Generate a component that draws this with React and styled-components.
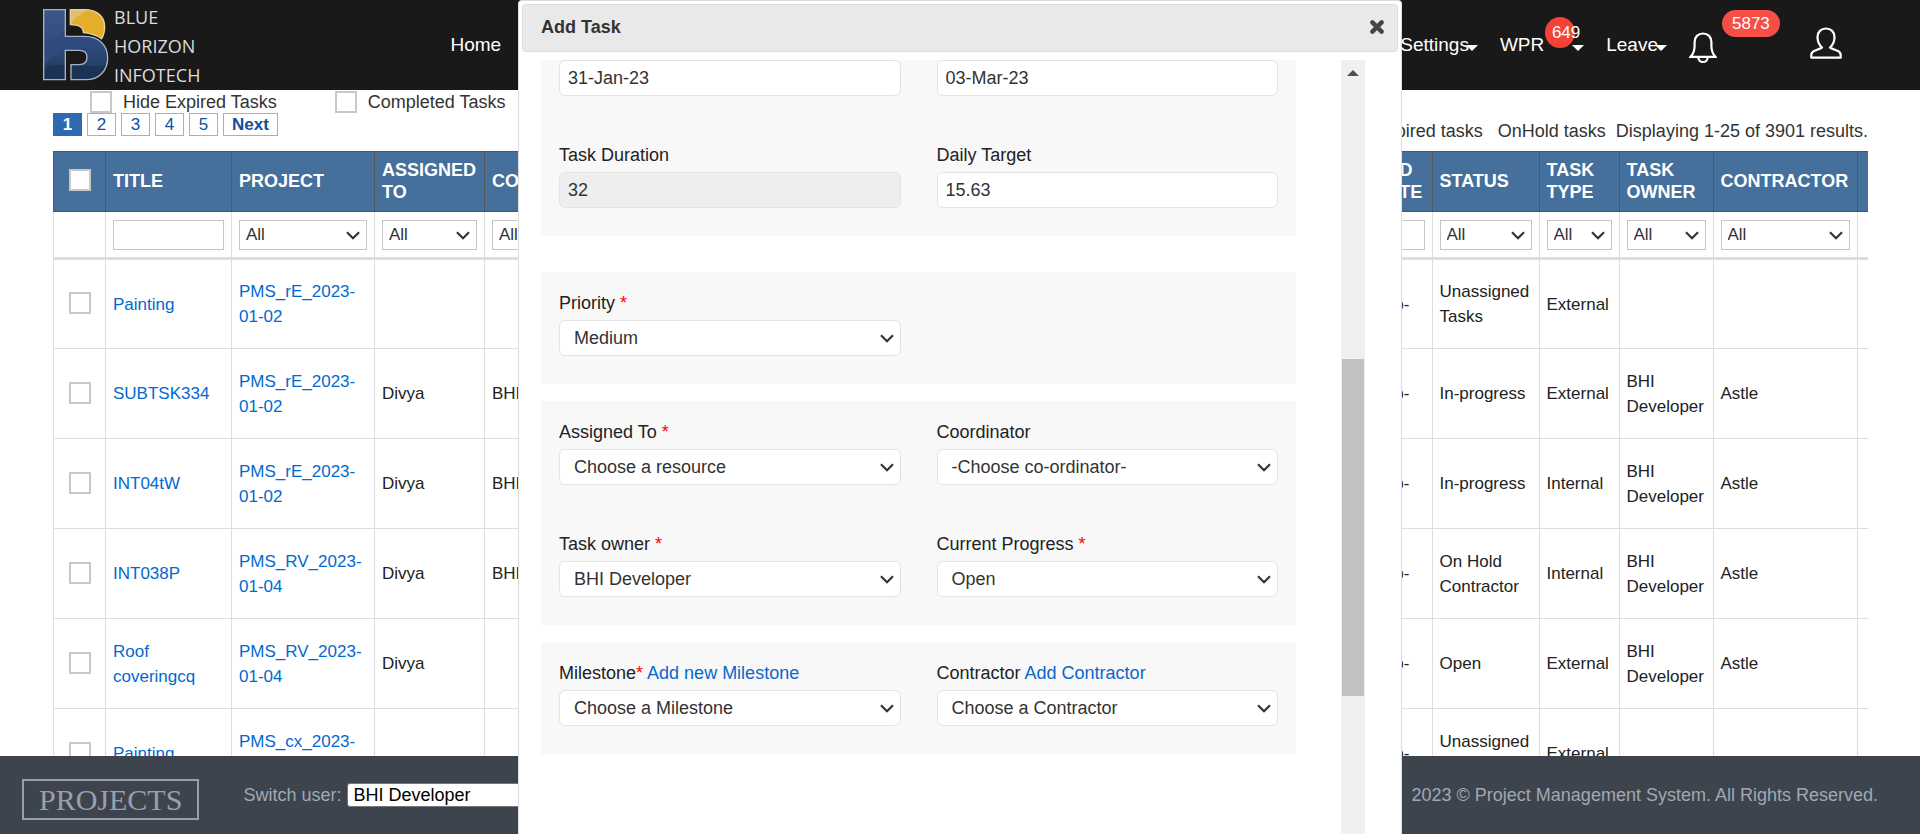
import React from "react";
import styled, { createGlobalStyle, css } from "styled-components";

const GlobalStyle = createGlobalStyle`
  *, *::before, *::after { box-sizing: border-box; }
  body {
    margin: 0;
    background: #fff;
    color: #333;
    font-family: "Liberation Sans", Arial, sans-serif;
    font-size: 18px;
  }
  input, select, button { font: inherit; color: inherit; margin: 0; }
`;

const Page = styled.div`
  display: flex;
  flex-direction: column;
  height: 100vh;
  overflow: hidden;
`;

/* ---------- Header ---------- */

const Header = styled.header`
  display: flex;
  align-items: center;
  flex: none;
  height: 90px;
  padding: 0 78px 0 42px;
  background: #191919;
  color: #fff;
`;

const Brand = styled.a`
  display: flex;
  align-items: center;
  gap: 5px;
  padding-bottom: 2px;
  color: #dcdcdc;
  font-family: "Open Sans", "Noto Sans", sans-serif;
  font-size: 18px;
  line-height: 29px;
  text-decoration: none;
`;

const BrandName = styled.span`
  display: flex;
  flex-direction: column;
  padding-top: 4px;
`;

const Nav = styled.nav`
  display: flex;
  align-items: center;
  flex: 1;
  font-size: 19px;
  line-height: 24px;
  padding-left: 250px;
`;

const NavLink = styled.a`
  color: #fff;
  text-decoration: none;
`;

const NavGroup = styled.div`
  display: flex;
  align-items: center;
  margin-left: auto;
`;

const MenuLink = styled(NavLink)`
  position: relative;
  display: flex;
  align-items: center;
  margin-right: 22px;
`;

const Caret = styled.span`
  width: 0;
  height: 0;
  margin-top: 6px;
  margin-left: ${(p) => (p.$apart ? 28 : -3)}px;
  border: 6px solid transparent;
  border-top-color: #fff;
  border-bottom: 0;
`;

const RoundBadge = styled.span`
  position: absolute;
  left: 45px;
  top: -16px;
  width: 30px;
  height: 31px;
  padding-left: 7px;
  border-radius: 50%;
  background: #f44336;
  font-size: 17px;
  line-height: 31px;
`;

const IconButton = styled.button`
  position: relative;
  display: flex;
  padding: 0;
  border: 0;
  background: none;
  color: #fff;
`;

const BellButton = styled(IconButton)`
  margin: 6px 93px 0 0;
`;

const AccountButton = styled(IconButton)`
  margin-bottom: 4px;
`;

const PillBadge = styled.span`
  position: absolute;
  left: 33px;
  top: -22px;
  padding: 0 10px;
  border-radius: 14px;
  background: #f65046;
  font-size: 17px;
  line-height: 27px;
`;

/* ---------- Task list ---------- */

const Main = styled.main`
  flex: 1;
  min-height: 0;
  overflow: hidden;
  padding: 0 52px 0 53px;
`;

const Toolbar = styled.div`
  display: flex;
  justify-content: space-between;
  align-items: flex-end;
  height: 61px;
`;

const ToolbarLeft = styled.div`
  align-self: flex-start;
`;

const CheckRow = styled.div`
  display: flex;
  gap: 58px;
  padding: 1px 0 0 37px;
`;

const CheckLabel = styled.label`
  display: flex;
  align-items: center;
  gap: 11px;
  height: 22px;
  line-height: 24px;
`;

const CheckBox = styled.input.attrs({ type: "checkbox" })`
  appearance: none;
  display: block;
  width: 22px;
  height: 22px;
  border: 2px solid #c8c8c8;
  background: #fff;
  ${(p) => p.$cell && css`margin: 0 auto 2px;`}
`;

const Pager = styled.nav`
  display: flex;
  gap: 5px;
  font-size: 17px;
`;

const PageLink = styled.a`
  ${(p) => (p.$wide ? css`padding: 0 8px;` : css`width: 29px;`)}
  border: 1px solid ${(p) => (p.$active ? "#2e6ab1" : "#9aafe5")};
  background: ${(p) => (p.$active ? "#2e6ab1" : "#fff")};
  color: ${(p) => (p.$active ? "#fff" : "#0e509e")};
  font-weight: ${(p) => (p.$bold ? "bold" : "normal")};
  line-height: 21px;
  text-align: center;
  text-decoration: none;
`;

const Summary = styled.div`
  display: flex;
  align-items: center;
  padding-bottom: 9px;
  line-height: 22px;
`;

const SummaryItem = styled.span`
  margin-left: ${(p) => p.$space}px;
`;

const TaskTable = styled.table`
  width: 100%;
  table-layout: fixed;
  border-collapse: collapse;
  color: #222;
  font-size: 17px;
  line-height: 25px;
`;

const Col = styled.col`
  width: ${(p) => (p.$width ? `${p.$width}px` : "auto")};
`;

const HeadCell = styled.th`
  height: 60px;
  padding: 0 7px 2px;
  border: 1px solid #555;
  ${(p) => p.$last && css`border-right: 0;`}
  background: #44709b;
  color: #fff;
  font-size: 18px;
  line-height: 22px;
  text-align: left;
`;

const FilterCell = styled.td`
  height: 47px;
  padding: 0 7px;
  border: 1px solid #ddd;
  border-top-color: #555;
  border-bottom: 3px solid #ddd;
  ${(p) => p.$last && css`border-right: 0;`}
`;

const Cell = styled.td`
  height: 90px;
  padding: 0 7px;
  border: 1px solid #ddd;
  ${(p) => p.$last && css`border-right: 0;`}
`;

const CellLink = styled.a`
  color: #0069d2;
  text-decoration: none;
`;

/* ---------- Form controls ---------- */

const SelectWrap = styled.span`
  position: relative;
  display: block;
  color: #333;

  svg {
    position: absolute;
    right: 7px;
    top: 50%;
    margin-top: -4px;
    pointer-events: none;
  }
`;

const FilterSelect = styled.select`
  appearance: none;
  display: block;
  width: 100%;
  height: 30px;
  padding: 0 6px;
  border: 1px solid #c4c4c4;
  border-radius: 0;
  background: #fff;
`;

const FilterInput = styled.input`
  display: block;
  width: 100%;
  height: 30px;
  border: 1px solid #c4c4c4;
`;

const fieldBox = css`
  appearance: none;
  display: block;
  width: 100%;
  height: 36px;
  border: 1px solid #e4e4e4;
  border-radius: 6px;
  background: #fff;
  color: #333;
  font-size: 18px;
`;

const TextField = styled.input`
  ${fieldBox}
  padding: 0 8px;
  &:disabled { background: #eee; }
`;

const SelectField = styled.select`
  ${fieldBox}
  padding: 0 14px;
`;

/* ---------- Footer ---------- */

const Footer = styled.footer`
  display: flex;
  align-items: center;
  flex: none;
  height: 78px;
  padding: 0 42px 0 22px;
  background: #3d444d;
  color: #a1a8b4;
`;

const FooterBrand = styled.a`
  margin: 9px 44px 0 0;
  padding: 0 15px;
  border: 2px solid #98a0ae;
  color: #98a0ae;
  font-family: "Liberation Serif", "Times New Roman", serif;
  font-size: 30px;
  line-height: 37px;
  text-decoration: none;
`;

const SwitchUser = styled.label`
  display: flex;
  align-items: center;
  gap: 6px;
`;

const UserSelect = styled.select`
  appearance: none;
  width: 250px;
  height: 24px;
  padding: 0 5px;
  border: 1px solid #767676;
  border-radius: 3px;
  background: #fff;
  color: #000;
`;

const Copyright = styled.span`
  margin-left: auto;
`;

/* ---------- Dialog ---------- */

const Overlay = styled.div`
  position: fixed;
  inset: 0;
  display: flex;
  justify-content: center;
`;

const Dialog = styled.section`
  display: flex;
  flex-direction: column;
  width: 884px;
  max-width: 100%;
  padding: 3px 3px 0;
  border: 1px solid #ddd;
  border-bottom: 0;
  border-radius: 4px 4px 0 0;
  background: #fff;
`;

const DialogTitleBar = styled.div`
  display: flex;
  justify-content: space-between;
  align-items: center;
  flex: none;
  height: 48px;
  padding: 0 13px 2px 18px;
  border: 1px solid #ddd;
  border-radius: 4px;
  background: #e9e9e9;
`;

const DialogTitle = styled.h2`
  margin: 0;
  font-size: 18px;
  line-height: 24px;
`;

const CloseButton = styled.button`
  display: flex;
  padding: 0;
  border: 0;
  background: none;
  color: #444;
`;

const DialogBody = styled.div`
  display: flex;
  flex: 1;
  min-height: 0;
  overflow: hidden;
  gap: 45px;
  padding: 8px 33px 0 19px;
`;

const Form = styled.form`
  flex: 1;
  display: flex;
  flex-direction: column;
  gap: 17px;
`;

const Panel = styled.div`
  display: grid;
  grid-template-columns: 1fr 1fr;
  column-gap: 36px;
  flex: none;
  padding: 0 18px;
  background: #f8f8f8;
  margin-bottom: ${(p) => (p.$spaced ? 19 : 0)}px;
`;

const Field = styled.div`
  padding: ${(p) => (p.$bare ? 0 : 18)}px 0 28px;
`;

const FieldLabel = styled.div`
  height: 30px;
  line-height: 26px;
  color: #222;
`;

const Required = styled.span`
  color: #f00;
`;

const FormLink = styled.a`
  color: #0a66cc;
  text-decoration: none;
`;

const ScrollBar = styled.div`
  width: 24px;
  display: flex;
  flex-direction: column;
  align-items: center;
  padding-top: 10px;
  background: #f0f0f0;
`;

const ScrollArrow = styled.span`
  border: 6px solid transparent;
  border-top: 0;
  border-bottom-color: #505050;
`;

const ScrollThumb = styled.span`
  width: 22px;
  height: 337px;
  margin-top: 283px;
  background: #c1c1c1;
`;

/* ---------- Icons ---------- */

const Chevron = () => (
  <svg width="14" height="9" viewBox="0 0 14 9" fill="none" stroke="currentColor" strokeWidth="2.2" aria-hidden="true">
    <path d="M1 1.2 7 7.2l6-6" />
  </svg>
);

const CloseIcon = () => (
  <svg width="14" height="14" viewBox="0 0 14 14" stroke="currentColor" strokeWidth="4.4" strokeLinecap="round" aria-hidden="true">
    <path d="M2.4 2.4l9.2 9.2M11.6 2.4l-9.2 9.2" />
  </svg>
);

const BellIcon = () => (
  <svg width="28" height="32" viewBox="0 0 28 32" fill="none" stroke="currentColor" strokeWidth="2.2" aria-hidden="true">
    <path d="M14 1.500c-5 0-8.400 3.500-8.400 8.500v4c0 5-1.400 8-4 10.800h24.800c-2.600-2.800-4-5.800-4-10.800v-4c0-5-3.400-8.500-8.400-8.500z" />
    <path d="M9.300 25c0 3 2 5 4.700 5s4.700-2 4.700-5" />
  </svg>
);

const UserIcon = () => (
  <svg width="32" height="32" viewBox="0 0 32 32" fill="none" stroke="currentColor" strokeWidth="2.2" strokeLinejoin="round" aria-hidden="true">
    <path d="M12 20.500C8.500 17.500 7.500 14 7.500 10c0-5 3.500-8.500 8.500-8.500s8.500 3.500 8.500 8.500c0 4-1 7.500-4.500 10.500 2 1.500 5 2.300 7.500 3.300 2.300 1 3.200 2 3.200 4.200v2.700H1.300V28c0-2.200.9-3.200 3.200-4.200 2.500-1 5.500-1.800 7.500-3.300z" />
  </svg>
);

const LogoMark = () => (
  <svg width="67" height="73" viewBox="18 18 201 219" aria-hidden="true">
    <defs>
      <linearGradient id="stem" x1="0" y1="0" x2="0" y2="1">
        <stop offset="0" stopColor="#3c5886" />
        <stop offset="0.45" stopColor="#324d80" />
        <stop offset="0.8" stopColor="#233f66" />
        <stop offset="1" stopColor="#1c3152" />
      </linearGradient>
      <clipPath id="stemClip">
        <path d="M23 23H88V103H145C190 103 215 130 215 168C215 205 190 233 150 233H105V188H130C146 188 153 178 153 165C153 150 145 145 130 145H88V233H23Z" />
      </clipPath>
      <clipPath id="sunClip">
        <path d="M103 23H145C185 23 206 45 206 75C206 90 203 100 197 110C185 101 160 93 142 92C142 76 130 68 103 68Z" />
      </clipPath>
    </defs>
    <g clipPath="url(#stemClip)">
      <path d="M18 18H220V237H18Z" fill="url(#stem)" />
      <path d="M18 160C45 105 80 85 110 80L220 100V150C150 125 70 135 18 195Z" fill="#2f4a7c" />
      <path d="M18 200C90 175 140 200 220 190V237H18Z" fill="#1d3356" />
    </g>
    <path d="M23 23H88V103H145C190 103 215 130 215 168C215 205 190 233 150 233H105V188H130C146 188 153 178 153 165C153 150 145 145 130 145H88V233H23Z" fill="none" stroke="#a9b3c6" strokeWidth="4" />
    <g clipPath="url(#sunClip)">
      <path d="M100 18H210V115H100Z" fill="#e4ae2b" />
      <path d="M100 18H172C140 30 118 45 103 68Z" fill="#e0bd70" />
    </g>
    <path d="M103 23H145C185 23 206 45 206 75C206 90 203 100 197 110C185 101 160 93 142 92C142 76 130 68 103 68Z" fill="none" stroke="#e6d3a0" strokeWidth="4" />
  </svg>
);

/* ---------- Data ---------- */

const columns = [
  { label: "", width: 52 },
  { label: "TITLE", width: 126, filter: "text" },
  { label: "PROJECT", width: 143, filter: "select" },
  { label: "ASSIGNED TO", width: 110, filter: "select" },
  { label: "COORDINATOR", filter: "select" },
  { label: "END DATE", width: 65, filter: "text" },
  { label: "STATUS", width: 107, filter: "select" },
  { label: "TASK TYPE", width: 80, filter: "select" },
  { label: "TASK OWNER", width: 94, filter: "select" },
  { label: "CONTRACTOR", width: 144, filter: "select" },
  { label: "", width: 11 },
];

const dev = "BHI Developer";
const tasks = [
  { title: "Painting", project: "PMS_rE_2023-01-02", status: "Unassigned Tasks", type: "External" },
  { title: "SUBTSK334", project: "PMS_rE_2023-01-02", assigned: "Divya", coordinator: dev, status: "In-progress", type: "External", owner: dev, contractor: "Astle" },
  { title: "INT04tW", project: "PMS_rE_2023-01-02", assigned: "Divya", coordinator: dev, status: "In-progress", type: "Internal", owner: dev, contractor: "Astle" },
  { title: "INT038P", project: "PMS_RV_2023-01-04", assigned: "Divya", coordinator: dev, status: "On Hold Contractor", type: "Internal", owner: dev, contractor: "Astle" },
  { title: "Roof coveringcq", project: "PMS_RV_2023-01-04", assigned: "Divya", status: "Open", type: "External", owner: dev, contractor: "Astle" },
  { title: "Painting", project: "PMS_cx_2023-01-04", status: "Unassigned Tasks", type: "External" },
];

/* ---------- Composed parts ---------- */

const Filter = ({ column }) => {
  if (column.filter === "text") return <FilterInput aria-label={column.label} />;
  if (column.filter === "select")
    return (
      <SelectWrap>
        <FilterSelect aria-label={column.label}>
          <option>All</option>
        </FilterSelect>
        <Chevron />
      </SelectWrap>
    );
  return null;
};

const TextRow = ({ id, label, ...rest }) => (
  <Field>
    <FieldLabel>
      <label htmlFor={id}>{label}</label>
    </FieldLabel>
    <TextField id={id} {...rest} />
  </Field>
);

const SelectRow = ({ id, label, required, link, value }) => (
  <Field>
    <FieldLabel>
      <label htmlFor={id}>
        {label}
        {required && <Required>{link ? "*" : " *"}</Required>}
      </label>
      {link && <> <FormLink href="#">{link}</FormLink></>}
    </FieldLabel>
    <SelectWrap>
      <SelectField id={id}>
        <option>{value}</option>
      </SelectField>
      <Chevron />
    </SelectWrap>
  </Field>
);

const AddTaskDialog = () => (
  <Overlay>
    <Dialog role="dialog" aria-labelledby="dialog-title">
      <DialogTitleBar>
        <DialogTitle id="dialog-title">Add Task</DialogTitle>
        <CloseButton aria-label="Close">
          <CloseIcon />
        </CloseButton>
      </DialogTitleBar>
      <DialogBody>
        <Form>
          <Panel $spaced>
            <Field $bare>
              <TextField aria-label="Start date" defaultValue="31-Jan-23" />
            </Field>
            <Field $bare>
              <TextField aria-label="End date" defaultValue="03-Mar-23" />
            </Field>
            <TextRow id="duration" label="Task Duration" defaultValue="32" disabled />
            <TextRow id="target" label="Daily Target" defaultValue="15.63" />
          </Panel>
          <Panel>
            <SelectRow id="priority" label="Priority" required value="Medium" />
          </Panel>
          <Panel>
            <SelectRow id="assigned" label="Assigned To" required value="Choose a resource" />
            <SelectRow id="coordinator" label="Coordinator" value="-Choose co-ordinator-" />
            <SelectRow id="owner" label="Task owner" required value="BHI Developer" />
            <SelectRow id="progress" label="Current Progress" required value="Open" />
          </Panel>
          <Panel>
            <SelectRow id="milestone" label="Milestone" required link="Add new Milestone" value="Choose a Milestone" />
            <SelectRow id="contractor" label="Contractor" link="Add Contractor" value="Choose a Contractor" />
          </Panel>
        </Form>
        <ScrollBar aria-hidden="true">
          <ScrollArrow />
          <ScrollThumb />
        </ScrollBar>
      </DialogBody>
    </Dialog>
  </Overlay>
);

export default function App() {
  return (
    <Page>
      <GlobalStyle />
      <Header>
        <Brand href="#">
          <LogoMark />
          <BrandName>
            <span>BLUE</span>
            <span>HORIZON</span>
            <span>INFOTECH</span>
          </BrandName>
        </Brand>
        <Nav>
          <NavLink href="#">Home</NavLink>
          <NavGroup>
            <MenuLink href="#">
              Settings
              <Caret />
            </MenuLink>
            <MenuLink href="#">
              WPR
              <RoundBadge>649</RoundBadge>
              <Caret $apart />
            </MenuLink>
            <MenuLink href="#">
              Leave
              <Caret />
            </MenuLink>
            <BellButton aria-label="Notifications">
              <BellIcon />
              <PillBadge>5873</PillBadge>
            </BellButton>
            <AccountButton aria-label="Account">
              <UserIcon />
            </AccountButton>
          </NavGroup>
        </Nav>
      </Header>

      <Main>
        <Toolbar>
          <ToolbarLeft>
            <CheckRow>
              <CheckLabel>
                <CheckBox />
                Hide Expired Tasks
              </CheckLabel>
              <CheckLabel>
                <CheckBox />
                Completed Tasks
              </CheckLabel>
            </CheckRow>
            <Pager aria-label="Pages">
              <PageLink href="#" $active $bold>1</PageLink>
              <PageLink href="#">2</PageLink>
              <PageLink href="#">3</PageLink>
              <PageLink href="#">4</PageLink>
              <PageLink href="#">5</PageLink>
              <PageLink href="#" $bold $wide>Next</PageLink>
            </Pager>
          </ToolbarLeft>
          <Summary>
            <SummaryItem $space={0}>Expired tasks</SummaryItem>
            <SummaryItem $space={15}>OnHold tasks</SummaryItem>
            <SummaryItem $space={10}>Displaying 1-25 of 3901 results.</SummaryItem>
          </Summary>
        </Toolbar>

        <TaskTable>
          <colgroup>
            {columns.map((c, i) => (
              <Col key={i} $width={c.width} />
            ))}
          </colgroup>
          <thead>
            <tr>
              {columns.map((c, i) => (
                <HeadCell key={i} $last={i === columns.length - 1}>
                  {i === 0 ? <CheckBox $cell aria-label="Select all tasks" /> : c.label}
                </HeadCell>
              ))}
            </tr>
            <tr>
              {columns.map((c, i) => (
                <FilterCell key={i} $last={i === columns.length - 1}>
                  <Filter column={c} />
                </FilterCell>
              ))}
            </tr>
          </thead>
          <tbody>
            {tasks.map((t, i) => (
              <tr key={i}>
                <Cell>
                  <CheckBox $cell aria-label={`Select ${t.title}`} />
                </Cell>
                <Cell><CellLink href="#">{t.title}</CellLink></Cell>
                <Cell><CellLink href="#">{t.project}</CellLink></Cell>
                <Cell>{t.assigned}</Cell>
                <Cell>{t.coordinator}</Cell>
                <Cell>15- Feb- 23</Cell>
                <Cell>{t.status}</Cell>
                <Cell>{t.type}</Cell>
                <Cell>{t.owner}</Cell>
                <Cell>{t.contractor}</Cell>
                <Cell $last />
              </tr>
            ))}
          </tbody>
        </TaskTable>
      </Main>

      <Footer>
        <FooterBrand href="#">PROJECTS</FooterBrand>
        <SwitchUser>
          Switch user:
          <UserSelect>
            <option>BHI Developer</option>
          </UserSelect>
        </SwitchUser>
        <Copyright>2023 © Project Management System. All Rights Reserved.</Copyright>
      </Footer>

      <AddTaskDialog />
    </Page>
  );
}
